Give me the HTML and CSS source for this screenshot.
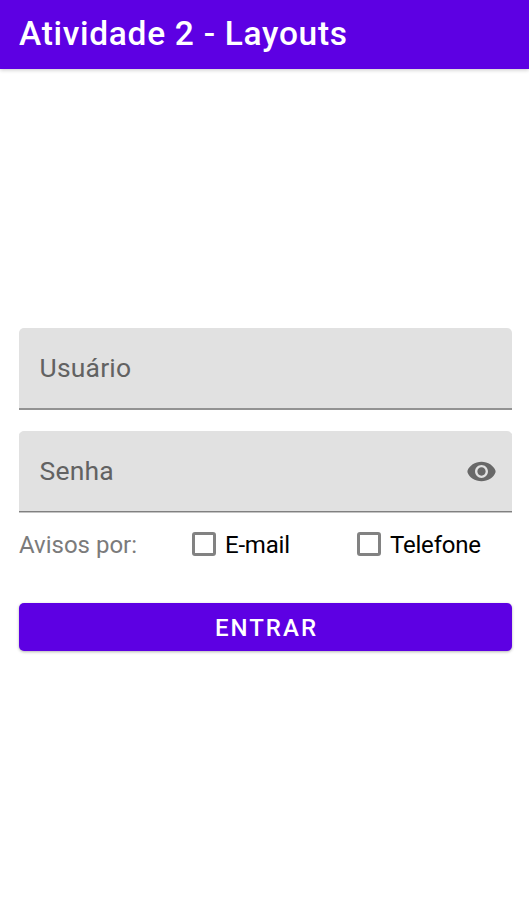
FILE: index.html
```html
<!DOCTYPE html>
<html lang="pt-BR">
<head>
<meta charset="utf-8">
<title>Atividade 2 - Layouts</title>
<link rel="stylesheet" href="styles.css">
</head>
<body>
<header class="app-bar"><h1 class="title">Atividade 2 - Layouts</h1></header>
<main class="form">
  <div class="field field-user"><span class="hint">Usuário</span></div>
  <div class="field field-password"><span class="hint">Senha</span>
    <svg class="eye" viewBox="0 0 24 24"><path d="M12 4.5C7 4.5 2.5 7.6 1.2 11.3Q1 12 1.2 12.7C2.5 16.4 7 19.5 12 19.5s9.5-3.1 10.8-6.8Q23 12 22.8 11.3C21.5 7.6 17 4.5 12 4.5zM12 17c-2.76 0-5-2.24-5-5s2.24-5 5-5 5 2.24 5 5-2.24 5-5 5zm0-8.2c-1.77 0-3.2 1.43-3.2 3.2s1.43 3.2 3.2 3.2 3.2-1.43 3.2-3.2-1.43-3.2-3.2-3.2z"/></svg>
  </div>
  <div class="notices">
    <span class="label">Avisos por:</span>
    <div class="option"><span class="box"></span><span class="option-text">E-mail</span></div>
    <div class="option"><span class="box"></span><span class="option-text">Telefone</span></div>
  </div>
  <button class="submit">ENTRAR</button>
</main>
</body>
</html>
```
FILE: styles.css
```css
* { box-sizing: border-box; }
body { margin: 0; height: 914px; background: #fff; font-family: Roboto, sans-serif; overflow: hidden; }
.app-bar { height: 69px; padding: 14px 19px 0; background: #5d00e3; box-shadow: 0 1px 4px rgba(0,0,0,.22); }
.title { margin: 0; color: #fff; font-size: 33.5px; line-height: 40px; font-weight: 500; letter-spacing: .7px; }
.form { padding: 259px 17px 0 19px; }
.field { display: flex; align-items: center; justify-content: space-between; height: 82px; padding: 0 15.5px 0 20.5px; background: #e1e1e1; border-radius: 5px 5px 0 0; }
.field-user { margin-bottom: 21px; border-bottom: 2px solid #929292; }
.field-password { border-bottom: 1px solid #c4c4c4; box-shadow: inset 0 -1px #808080; }
.hint { margin-top: -1px; color: #626262; font-size: 26.5px; line-height: 32px; letter-spacing: .2px; }
.eye { width: 31px; height: 31px; fill: #686868; }
.notices { display: grid; grid-template-columns: 173px 165px 1fr; align-items: center; height: 62px; }
.label { margin-top: 2px; color: #7b7b7b; font-size: 24px; line-height: 28px; }
.option { display: flex; align-items: center; gap: 9px; }
.box { width: 24px; height: 24px; border: 3px solid #828282; border-radius: 3px; }
.option-text { margin-top: 1px; color: #000; font-size: 24px; line-height: 28px; letter-spacing: -.2px; }
.submit { display: block; width: 100%; height: 48px; margin-top: 28px; padding: 2px 0 0 2px; border: 0; border-radius: 5px; background: #5d00e3; color: #fff; font: 500 24px Roboto, sans-serif; letter-spacing: 2px; box-shadow: 0 1px 3px rgba(0,0,0,.3); }
```
